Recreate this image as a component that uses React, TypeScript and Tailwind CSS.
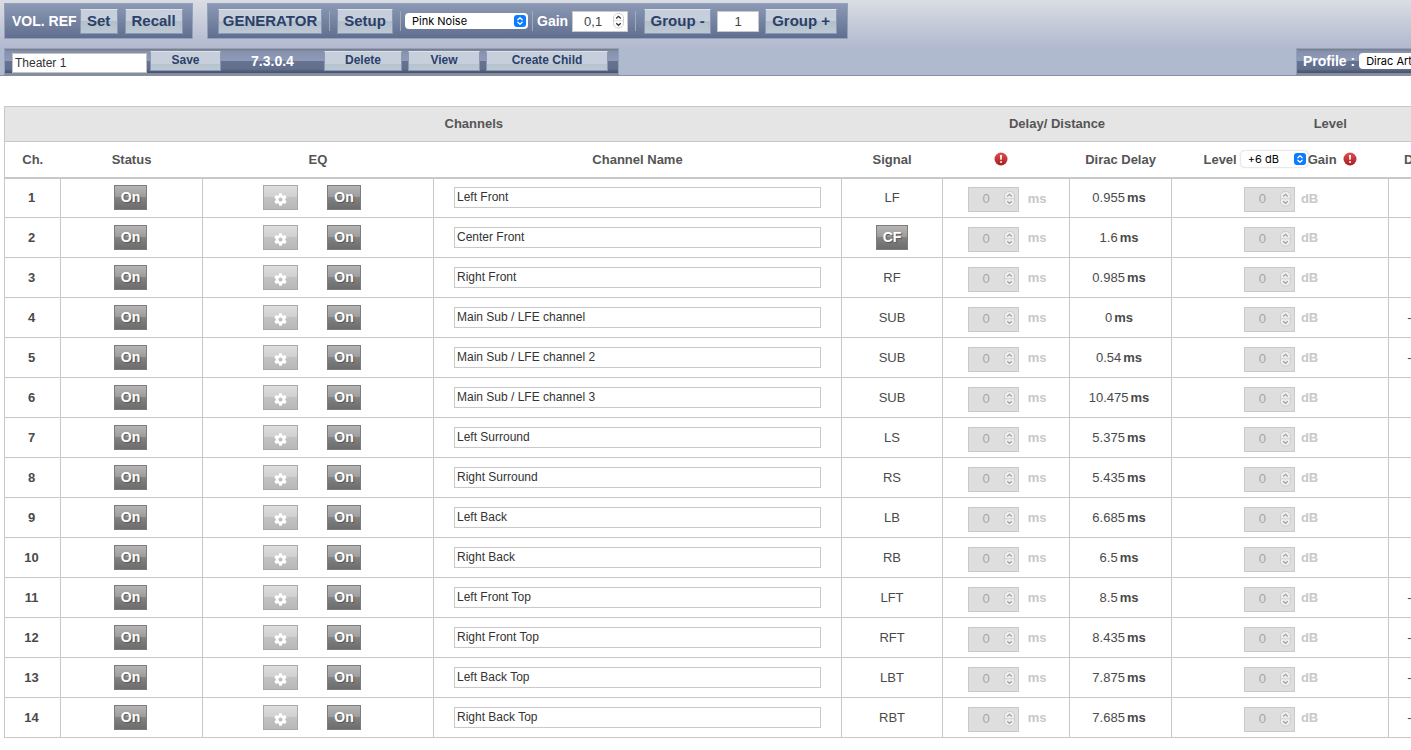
import React from "react";

type Channel = { name: string; signal: string; delay: string; level: string };

const channels: Channel[] = [
  { name: "Left Front", signal: "LF", delay: "0.955", level: "0" },
  { name: "Center Front", signal: "CF", delay: "1.6", level: "0" },
  { name: "Right Front", signal: "RF", delay: "0.985", level: "0" },
  { name: "Main Sub / LFE channel", signal: "SUB", delay: "0", level: "-10.475" },
  { name: "Main Sub / LFE channel 2", signal: "SUB", delay: "0.54", level: "-10.475" },
  { name: "Main Sub / LFE channel 3", signal: "SUB", delay: "10.475", level: "0" },
  { name: "Left Surround", signal: "LS", delay: "5.375", level: "0" },
  { name: "Right Surround", signal: "RS", delay: "5.435", level: "0" },
  { name: "Left Back", signal: "LB", delay: "6.685", level: "0" },
  { name: "Right Back", signal: "RB", delay: "6.5", level: "0" },
  { name: "Left Front Top", signal: "LFT", delay: "8.5", level: "-10.475" },
  { name: "Right Front Top", signal: "RFT", delay: "8.435", level: "-10.475" },
  { name: "Left Back Top", signal: "LBT", delay: "7.875", level: "-10.475" },
  { name: "Right Back Top", signal: "RBT", delay: "7.685", level: "-10.475" },
];

function Stepper({ disabled = false }: { disabled?: boolean }) {
  return (
    <svg
      width="11"
      height="16"
      viewBox="0 0 11 16"
      fill="none"
      aria-hidden="true"
      className={disabled ? "pointer-events-none text-[#a3a3a3]" : "pointer-events-none text-[#333]"}
    >
      <rect x="0.5" y="0.5" width="10" height="14.5" rx="4.5" fill={disabled ? "#eee" : "#fff"} stroke={disabled ? "#cdcdcd" : "#d2d2d2"} />
      <path d="M1 7.75h9" stroke={disabled ? "#cfcfcf" : "#ddd"} />
      <path d="M3.2 5.4 5.5 3.3l2.3 2.1M3.2 10.2l2.3 2.1 2.3-2.1" stroke="currentColor" strokeWidth="1.3" />
    </svg>
  );
}

function BlueArrows() {
  return (
    <svg width="12" height="12" viewBox="0 0 12 12" fill="none" aria-hidden="true" className="pointer-events-none">
      <rect width="12" height="12" rx="3" fill="#0a7cff" />
      <path d="M3.8 4.8 6 2.7l2.2 2.1M3.8 7.2 6 9.3l2.2-2.1" stroke="#fff" strokeWidth="1.2" strokeLinecap="round" strokeLinejoin="round" />
    </svg>
  );
}

function Alert() {
  return (
    <svg width="14" height="14" viewBox="0 0 14 14" role="img" aria-label="Warning" className="inline-block">
      <defs>
        <linearGradient id="alert" x1="0" y1="0" x2="0" y2="1">
          <stop offset="0" stopColor="#e0514f" />
          <stop offset="1" stopColor="#a51d22" />
        </linearGradient>
      </defs>
      <circle cx="7" cy="7" r="6.5" fill="url(#alert)" />
      <path d="M6 3h2l-.3 4.8H6.3z" fill="#fff" />
      <circle cx="7" cy="9.9" r="1" fill="#fff" />
    </svg>
  );
}

function Gear() {
  return (
    <svg width="15" height="15" viewBox="0 0 24 24" fill="#fff" aria-hidden="true">
      <path d="M19.4 13c0-.3.1-.6.1-1s0-.7-.1-1l2.4-1.8-2.4-4.3-2.9 1.2c-.6-.4-1.200-.8-1.900-1L14.200 2H9.800l-.4 3.100c-.7.2-1.300.6-1.900 1L4.600 4.900 2.200 9.200 4.600 11c0 .3-.1.6-.1 1s0 .7.1 1l-2.400 1.800 2.400 4.300 2.900-1.200c.6.4 1.200.8 1.900 1l.4 3.100h4.400l.4-3.100c.7-.2 1.300-.6 1.900-1l2.900 1.200 2.400-4.300zM12 15.300a3.300 3.300 0 1 1 0-6.600 3.300 3.300 0 0 1 0 6.600z" />
    </svg>
  );
}

const panel = "flex items-center border border-[#93a1bd] bg-linear-to-b from-[#8c99b5] to-[#616e8f]";
const strip =
  "flex items-center border border-b-2 border-[#93a1bd] border-b-[#858d9d] bg-[linear-gradient(to_bottom,#747b8b_0,#858d9d_2px,#8692b0_3px,#8e9ab6_12px,#66728f_12px,#616e8e_20px,#4b566e_23px)]";
const bigButton =
  "h-[25px] shrink-0 border border-[#8a9ab6] border-t-[#dbe2ea] bg-[linear-gradient(to_bottom,#c6cfdb_50%,#b4bfcc_50%,#bdc8d5)] text-center text-[15px] leading-5 font-bold text-[#2b4068]";
const smallButton =
  "h-5 shrink-0 border border-[#8a9ab6] border-t-[#dbe2ea] bg-[linear-gradient(to_bottom,#c6cfdb_65%,#b7c2cf_65%,#bdc8d5)] pb-0.5 text-center text-xs leading-4 font-bold text-[#2b4068]";

function Divider() {
  return <span className="h-5 w-px shrink-0 bg-[#a2a9b7]" />;
}

function DarkButton({ children, label }: { children: React.ReactNode; label: string }) {
  return (
    <button
      aria-label={label}
      className="block h-[25px] border border-[#7c7c7c] bg-[linear-gradient(to_bottom,#b5b5b5,#9b9b9b_50%,#828282_50%,#6c6c6c)] px-1.5 pb-0.5 text-sm leading-5 font-bold text-white [text-shadow:1px_1px_1px_#555]"
    >
      {children}
    </button>
  );
}

function DisabledNumber({ label }: { label: string }) {
  return (
    <span className="relative inline-block h-[25px] w-[51px]">
      <input
        aria-label={label}
        disabled
        defaultValue="0"
        className="block h-full w-full border border-[#c9c9c9] bg-[#dedede] pr-3.5 pb-0.5 text-center text-[13px] text-[#a6a6a6]"
      />
      <span className="absolute top-1 right-1">
        <Stepper disabled />
      </span>
    </span>
  );
}

export default function App() {
  const cell = "border border-[#c8c8c8] p-0";
  const head = "p-0 text-[13px] font-bold text-[#555]";
  return (
    <div className="min-h-screen overflow-x-hidden bg-white font-['Liberation_Sans',Arial,sans-serif] text-[13px] text-[#4a4a4a]">
      <header className="min-w-[1490px] border-b border-[#8490aa] bg-[linear-gradient(to_bottom,#dadde3,#b3bad0_47px,#afbace_48px)] pt-[3px] pl-1">
        <div className="flex gap-3.5">
          <div className={`${panel} h-9 w-[189px] gap-[7px] pl-[7px]`}>
            <span className="-mr-1 text-sm font-bold text-white">VOL. REF</span>
            <button className={`${bigButton} w-[38px]`}>Set</button>
            <button className={`${bigButton} w-[58px]`}>Recall</button>
          </div>
          <div className={`${panel} h-9 w-[641px] pl-2.5`}>
            <button className={`${bigButton} w-[104px]`}>GENERATOR</button>
            <span className="ml-[7px] flex"><Divider /></span>
            <button className={`${bigButton} ml-[7px] w-14`}>Setup</button>
            <span className="ml-[7px] flex"><Divider /></span>
            <span className="relative ml-1 block">
              <select aria-label="Generator signal" className="block h-4 w-[123px] appearance-none rounded-[4px] bg-white pl-[7px] font-[Inter,sans-serif] text-[11px] leading-4 text-black">
                <option>Pink Noise</option>
              </select>
              <span className="pointer-events-none absolute top-0.5 right-0.5"><BlueArrows /></span>
            </span>
            <span className="ml-1 flex"><Divider /></span>
            <label htmlFor="gain" className="ml-1 text-sm font-bold text-white">Gain</label>
            <span className="relative ml-1 block">
              <input id="gain" defaultValue="0,1" className="block h-[21px] w-14 border border-[#c9c9c9] bg-white pr-3.5 text-center text-[13px] text-[#444]" />
              <span className="absolute top-0.5 right-1"><Stepper /></span>
            </span>
            <span className="ml-[7px] flex"><Divider /></span>
            <button className={`${bigButton} ml-2 w-[67px]`}>Group -</button>
            <input aria-label="Group number" defaultValue="1" className="ml-1.5 block h-[21px] w-[42px] shrink-0 border border-[#c9c9c9] bg-white text-center text-[13px] text-[#444]" />
            <button className={`${bigButton} ml-1.5 w-[72px]`}>Group +</button>
          </div>
        </div>
        <div className="mt-[9px] flex justify-between">
          <div className={`${strip} h-[27px] w-[615px] pl-[7px]`}>
            <input aria-label="Theater name" defaultValue="Theater 1" className="h-5 w-[135px] shrink-0 self-end border border-[#c4c4c4] bg-white px-0.5 text-xs text-[#333]" />
            <button className={`${smallButton} ml-[3px] w-[71px]`}>Save</button>
            <span className="w-[103px] text-center text-sm font-bold text-white">7.3.0.4</span>
            <button className={`${smallButton} w-[78px]`}>Delete</button>
            <button className={`${smallButton} ml-1.5 w-[72px]`}>View</button>
            <button className={`${smallButton} ml-1.5 w-[122px]`}>Create Child</button>
          </div>
          <div className={`${strip} h-[27px] w-[194px] pl-1.5`}>
            <label htmlFor="profile" className="text-sm font-bold text-white">Profile :</label>
            <select id="profile" className="ml-1 h-4 w-32 appearance-none rounded-[4px] bg-white pl-[7px] font-[Inter,sans-serif] text-[11px] leading-4 text-black">
              <option>Dirac Art</option>
            </select>
          </div>
        </div>
      </header>

      <main className="mt-[30px] ml-1">
        <table className="w-full min-w-[1486px] table-fixed border-collapse border border-[#c8c8c8]">
          <colgroup>
            <col className="w-14" />
            <col className="w-[142px]" />
            <col className="w-[231px]" />
            <col className="w-[408px]" />
            <col className="w-[101px]" />
            <col className="w-[127px]" />
            <col className="w-[102px]" />
            <col className="w-[217px]" />
            <col />
          </colgroup>
          <thead>
            <tr className="h-[35px] border-y border-[#c8c8c8] bg-[#e5e5e5]">
              <th colSpan={5} className={head}>Channels</th>
              <th colSpan={2} className={head}>Delay/ Distance</th>
              <th colSpan={2} className={head}>Level</th>
            </tr>
            <tr className="h-9 border-b-2 border-[#c8c8c8]">
              <th className={head}>Ch.</th>
              <th className={head}>Status</th>
              <th className={head}>EQ</th>
              <th className={head}>Channel Name</th>
              <th className={head}>Signal</th>
              <th className={head}><span className="flex justify-center pr-2.5"><Alert /></span></th>
              <th className={head}>Dirac Delay</th>
              <th className={head}>
                <span className="flex items-center justify-center">
                  <label htmlFor="level">Level</label>
                  <span className="relative ml-1 block font-normal">
                    <select id="level" className="block h-4 w-[67px] appearance-none rounded-[4px] bg-white pl-[7px] font-[Inter,sans-serif] text-[11px] leading-4 text-black shadow-[0_0_2px_#aaa]">
                      <option>+6 dB</option>
                    </select>
                    <span className="pointer-events-none absolute top-0.5 right-0.5"><BlueArrows /></span>
                  </span>
                  <span className="mr-1.5">Gain</span>
                  <Alert />
                </span>
              </th>
              <th className={head}>Dirac Level</th>
            </tr>
          </thead>
          <tbody>
            {channels.map((c, i) => (
              <tr key={i} className="h-10 text-center">
                <td className={`${cell} pr-0.5 font-bold`}>{i + 1}</td>
                <td className={cell}>
                  <span className="flex justify-center pr-0.5"><DarkButton label={`Channel ${i + 1} status`}>On</DarkButton></span>
                </td>
                <td className={cell}>
                  <span className="flex items-center justify-center gap-[29px] pr-3">
                    <button aria-label={`Channel ${i + 1} EQ settings`} className="flex h-[25px] w-[35px] items-center justify-center border border-[#a9a9a9] bg-[linear-gradient(to_bottom,#dedede,#cfcfcf_50%,#c2c2c2_50%,#b8b8b8)] pt-1">
                      <Gear />
                    </button>
                    <DarkButton label={`Channel ${i + 1} EQ`}>On</DarkButton>
                  </span>
                </td>
                <td className={`${cell} px-5`}>
                  <input aria-label={`Channel ${i + 1} name`} defaultValue={c.name} className="block h-[21px] w-full border border-[#c9c9c9] bg-white px-0.5 pb-0.5 text-xs text-[#333]" />
                </td>
                <td className={cell}>
                  {c.signal === "CF" ? (
                    <span className="flex justify-center"><DarkButton label="CF">CF</DarkButton></span>
                  ) : (
                    c.signal
                  )}
                </td>
                <td className={cell}>
                  <span className="flex items-center justify-center gap-[9px] pt-[3px] pl-0.5">
                    <DisabledNumber label={`Channel ${i + 1} delay`} />
                    <span className="pb-0.5 font-bold text-[#c8c8c8]">ms</span>
                  </span>
                </td>
                <td className={`${cell} pr-[3px]`}>{c.delay}<b className="ml-0.5">ms</b></td>
                <td className={cell}>
                  <span className="flex items-center justify-center gap-1.5 pt-[3px] pl-0.5">
                    <DisabledNumber label={`Channel ${i + 1} gain`} />
                    <span className="pb-0.5 font-bold text-[#c8c8c8]">dB</span>
                  </span>
                </td>
                <td className={cell}>{c.level}<b className="ml-0.5">dB</b></td>
              </tr>
            ))}
          </tbody>
        </table>
      </main>
    </div>
  );
}
